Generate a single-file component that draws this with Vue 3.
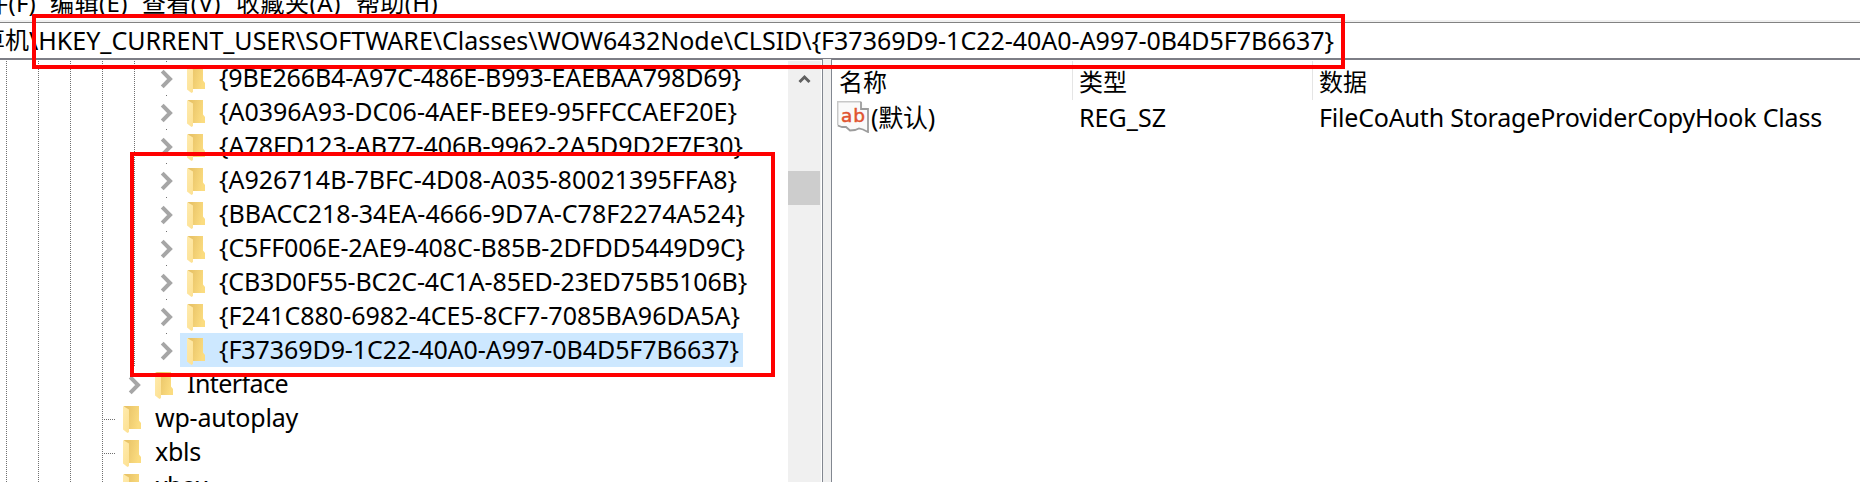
<script setup>
const menu = [
  { text: '文件(F)', x: -40, w: 76 },
  { text: '编辑(E)', x: 50, w: 78 },
  { text: '查看(V)', x: 142, w: 79 },
  { text: '收藏夹(A)', x: 236, w: 105 },
  { text: '帮助(H)', x: 356, w: 82 },
]
const keys = [
  { text: '{9BE266B4-A97C-486E-B993-EAEBAA798D69}', w: 522 },
  { text: '{A0396A93-DC06-4AEF-BEE9-95FFCCAEF20E}', w: 518 },
  { text: '{A78FD123-AB77-406B-9962-2A5D9D2F7F30}', w: 524 },
  { text: '{A926714B-7BFC-4D08-A035-80021395FFA8}', w: 518 },
  { text: '{BBACC218-34EA-4666-9D7A-C78F2274A524}', w: 526 },
  { text: '{C5FF006E-2AE9-408C-B85B-2DFDD5449D9C}', w: 526 },
  { text: '{CB3D0F55-BC2C-4C1A-85ED-23ED75B5106B}', w: 528 },
  { text: '{F241C880-6982-4CE5-8CF7-7085BA96DA5A}', w: 521 },
  { text: '{F37369D9-1C22-40A0-A997-0B4D5F7B6637}', w: 520, selected: true },
]
const rows = [
  ...keys.map((k) => ({ ...k, level: 3, arrow: true })),
  { text: 'Interface', w: 101, level: 2, arrow: true },
  { text: 'wp-autoplay', w: 143, level: 1 },
  { text: 'xbls', w: 46, level: 1 },
  { text: 'xbox', w: 52, level: 1 },
]

// Spreads a label's letters so that it takes up the given width.
const vFit = {
  mounted(el, { value }) {
    const n = [...el.textContent].length
    el.style.letterSpacing = `${(value - el.getBoundingClientRect().width) / n}px`
  },
}
</script>

<template>
  <div class="regedit">
    <svg class="defs" width="0" height="0">
      <defs>
        <linearGradient id="back" x1="0" x2="1" y1="0" y2="0.3">
          <stop offset="0.2" stop-color="#e9c468" />
          <stop offset="1" stop-color="#fbdc80" />
        </linearGradient>
        <linearGradient id="flap" x1="0" x2="0.6" y1="0" y2="1">
          <stop offset="0" stop-color="#ffebae" />
          <stop offset="1" stop-color="#fde296" />
        </linearGradient>
      </defs>
    </svg>

    <nav class="menu">
      <span v-for="m in menu" :key="m.text" class="item" :style="{ left: m.x + 'px' }">
        <span v-fit="m.w" class="t">{{ m.text }}</span>
      </span>
    </nav>
    <div class="address">
      <span v-fit="48" class="t pc">算机</span><span v-fit="1305" class="t path">\HKEY_CURRENT_USER\SOFTWARE\Classes\WOW6432Node\CLSID\{F37369D9-1C22-40A0-A997-0B4D5F7B6637}</span>
    </div>

    <div class="panes">
      <section class="tree">
        <div v-for="r in rows" :key="r.text" class="row">
          <i v-for="n in r.level + 2" :key="n" class="guide"></i>
          <span class="toggle" :class="{ leaf: !r.arrow, dot: r.level === 3 }">
            <svg v-if="r.arrow" width="14" height="20" viewBox="0 0 14 20">
              <path d="M2.200 2.200 10 10 2.200 17.800" fill="none" stroke="#a6a6a6" stroke-width="4" />
            </svg>
          </span>
          <span class="key" :class="{ selected: r.selected }">
            <svg class="folder" width="20" height="28" viewBox="0 0 20 28">
              <path d="M1 0H16V14.500L18 17V23H5Z" fill="url(#back)" />
              <path d="M0 0 6 3.500V26L4.500 27 0 23.500Z" fill="url(#flap)" />
            </svg>
            <span v-fit="r.w" class="t">{{ r.text }}</span>
          </span>
        </div>
      </section>
      <div class="scroll">
        <svg width="33" height="34" viewBox="0 0 33 34">
          <path d="M11.500 22 16.500 17l5 5" fill="none" stroke="#606060" stroke-width="3" />
        </svg>
        <div class="thumb"></div>
      </div>
      <div class="splitter"></div>
      <section class="values">
        <div class="head">
          <span class="c1"><span v-fit="48" class="t">名称</span></span>
          <span class="c2"><span v-fit="48" class="t">类型</span></span>
          <span class="c3"><span v-fit="48" class="t">数据</span></span>
        </div>
        <div class="value">
          <span class="c1">
            <svg class="sz" width="32" height="32" viewBox="0 0 32 32">
              <path d="M.7.7H24L31 8V31L26 28.500 22 27.500 18 29 13 29.500 9 26 5 26 .7 24.500Z" fill="#fafafa" />
              <path d="M.7 24V.7H24" fill="none" stroke="#c8c8c8" stroke-width="1.500" />
              <path d="M24 .7V8H31V31L26 28.500 22 27.500 18 29 13 29.500 9 26 5 26 .7 24.500" fill="none" stroke="#9c9c9c" stroke-width="1.800" />
              <text x="4" y="20.500" textLength="24" class="ab">ab</text>
            </svg>
            <span v-fit="64" class="t">(默认)</span>
          </span>
          <span class="c2"><span v-fit="87" class="t">REG_SZ</span></span>
          <span class="c3"><span v-fit="503" class="t">FileCoAuth StorageProviderCopyHook Class</span></span>
        </div>
      </section>
    </div>

    <div class="mark mark-path"></div>
    <div class="mark mark-keys"></div>
  </div>
</template>

<style>
body { margin: 0; overflow: hidden; }
</style>

<style scoped>
.regedit {
  position: relative;
  width: 1860px;
  height: 482px;
  overflow: hidden;
  background: #fff;
  color: #000;
  font: 25px/34px "Noto Sans", "Noto Sans CJK SC", sans-serif;
  display: flex;
  flex-direction: column;
}
.defs { position: absolute; }
.t { display: inline-block; white-space: pre; flex: none; }
.menu { position: relative; height: 20px; flex: none; overflow: hidden; border-bottom: 2px solid #f0f0f0; font-size: 24px; }
.item { position: absolute; top: -14px; }
.address {
  height: 35px;
  flex: none;
  display: flex;
  line-height: 34px;
  overflow: hidden;
  border-top: 1px solid #828282;
  border-bottom: 2px solid #7d7e86;
}
.pc { margin-left: -19px; font-size: 24px; }
.panes { flex: 1; display: flex; min-height: 0; }
.tree { width: 788px; flex: none; overflow: hidden; padding-top: 1px; box-sizing: border-box; }
.row { height: 34px; display: flex; padding-left: 6px; line-height: 32px; }
.guide {
  width: 32px;
  flex: none;
  background: repeating-linear-gradient(#707070 0 1px, transparent 1px 2px) left top / 1px 100% no-repeat;
}
.toggle { width: 14px; flex: none; padding-top: 8px; box-sizing: border-box; }
.toggle svg { display: block; margin-left: -6px; }
.dot { background: linear-gradient(#707070, #707070) left top / 1px 1px no-repeat; }
.leaf {
  background:
    repeating-linear-gradient(#707070 0 1px, transparent 1px 2px) left top / 1px 100% no-repeat,
    repeating-linear-gradient(90deg, #707070 0 1px, transparent 1px 2px) left 18px / 100% 1px no-repeat;
}
.key { display: flex; padding: 0 4px 0 7px; }
.selected { background: #cde8ff; }
.folder { flex: none; margin: 5px 12px 0 0; }
.scroll { width: 33px; flex: none; background: #f0f0f0; margin-top: 1px; }
.scroll svg { display: block; margin-top: -1px; }
.thumb { width: 32px; height: 34px; margin-top: 77px; background: #cdcdcd; }
.splitter {
  width: 8px;
  flex: none;
  margin: -1px 0 0 1px;
  background: #f0f0f0;
  border: solid #828790;
  border-width: 0 1px;
}
.values { flex: 1; padding-top: 1px; }
.head { display: flex; height: 39px; line-height: 41px; font-size: 24px; }
.value { display: flex; height: 36px; line-height: 34px; }
.c1 { width: 240px; display: flex; box-sizing: border-box; padding-left: 7px; }
.c2 { width: 240px; box-sizing: border-box; padding-left: 6px; }
.c3 { padding-left: 6px; }
.value .c1 { padding-left: 5px; width: 241px; }
.head .c1, .head .c2 { border-right: 1px solid #e5e5e5; }
.head .c1 { width: 241px; }
.sz { margin: 1px 2px 0 0; }
.ab { font: 18.5px "DejaVu Sans", sans-serif; fill: #e0532f; stroke: #e0532f; stroke-width: 0.5px; }
.mark { position: absolute; box-sizing: border-box; border: 4px solid #f00; }
.mark-path { left: 32px; top: 14px; width: 1313px; height: 55px; }
.mark-keys { left: 130px; top: 152px; width: 645px; height: 225px; }
</style>
